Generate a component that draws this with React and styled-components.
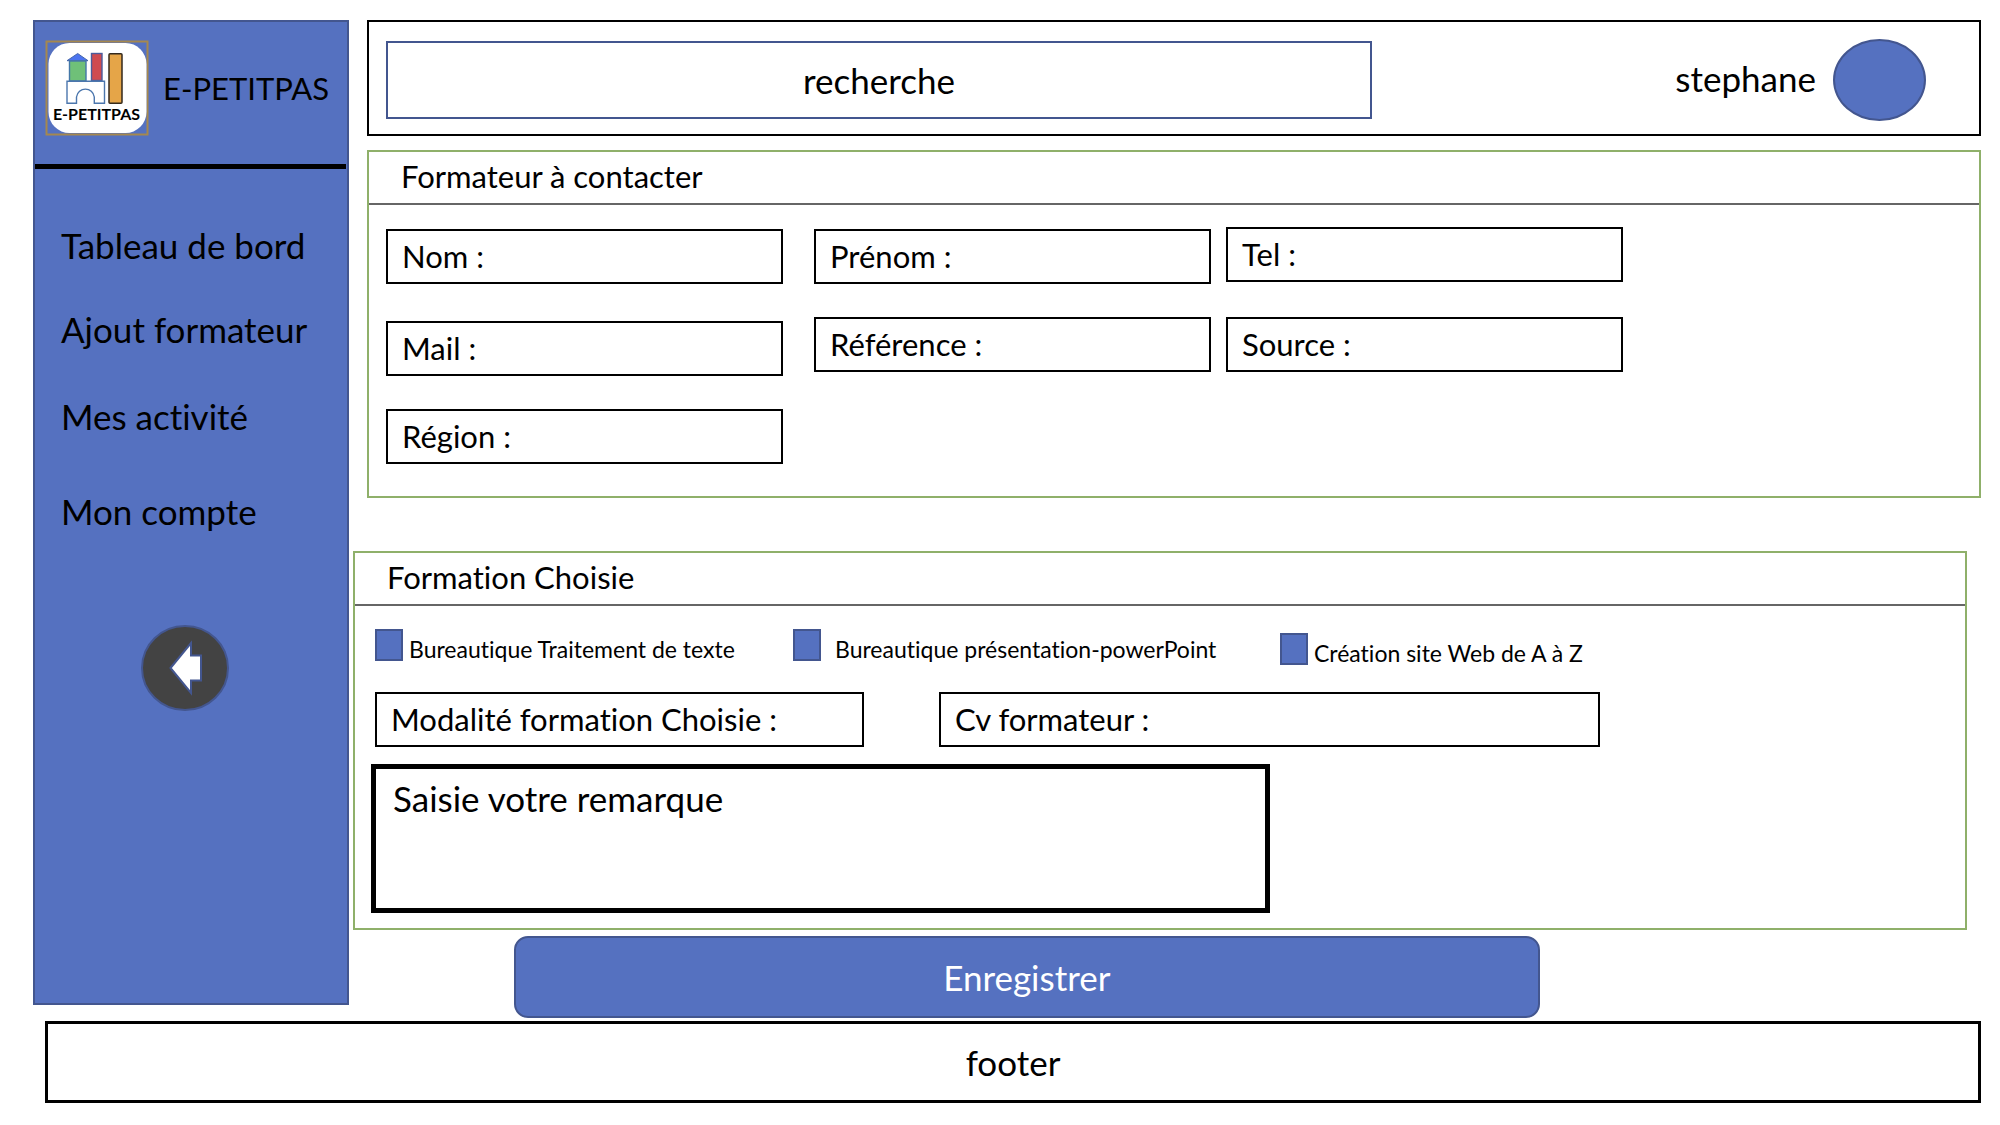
import React from "react";
import styled, { createGlobalStyle } from "styled-components";

const blue = "#5571c0";
const navy = "#43568f";
const green = "#8fb06a";

const GlobalStyle = createGlobalStyle`
  *, *::before, *::after { box-sizing: border-box; }
  body {
    margin: 0;
    background: #fff;
    color: #000;
    font: 35px/40px Lato, sans-serif;
    font-variant-ligatures: none;
  }
  input, textarea, button { font: inherit; font-variant-ligatures: none; color: inherit; }
  input::placeholder, textarea::placeholder { color: #000; opacity: 1; }
`;

const Page = styled.div`
  padding: 20px 19px 21px 33px;
`;

const Shell = styled.div`
  display: flex;
  gap: 4px;
`;

const Sidebar = styled.aside`
  flex: 0 0 316px;
  margin-bottom: 13px;
  border: 2px solid ${navy};
  background: ${blue};
`;

const Brand = styled.div`
  display: flex;
  align-items: center;
  gap: 14px;
  height: 147px;
  margin-right: 1px;
  padding: 0 0 10px 10px;
  border-bottom: 5px solid #000;
`;

const BrandName = styled.span`
  font-size: 31px;
`;

const Logo = styled.svg`
  flex: none;
  width: 104px;
  height: 96px;
`;

const Nav = styled.nav`
  display: grid;
  grid-template-rows: 84px 87px 95px 40px;
  padding: 56px 0 0 26px;
`;

const NavLink = styled.a`
  justify-self: start;
  color: #000;
  text-decoration: none;
`;

const BackButton = styled.button`
  display: block;
  width: 88px;
  height: 86px;
  margin: 94px 0 0 106px;
  padding: 0;
  border: 0;
  background: none;
`;

const Main = styled.main`
  flex: 1;
  min-width: 0;
`;

const TopBar = styled.header`
  display: flex;
  align-items: center;
  height: 116px;
  margin-left: 14px;
  padding: 3px 53px 0 17px;
  border: 2px solid #000;
`;

const Search = styled.input`
  flex: 0 1 986px;
  min-width: 0;
  height: 78px;
  padding: 0;
  border: 2px solid ${navy};
  background: #fff;
  text-align: center;
`;

const User = styled.div`
  display: flex;
  align-items: center;
  gap: 17px;
  margin-left: auto;
`;

const UserName = styled.span`
  padding-bottom: 4px;
`;

const Avatar = styled.span`
  width: 93px;
  height: 82px;
  border: 2px solid ${navy};
  border-radius: 50%;
  background: ${blue};
`;

const Panel = styled.section`
  margin: ${(p) => p.$margin};
  border: 2px solid ${green};
`;

const PanelTitle = styled.h2`
  margin: 0;
  padding: 4px 32px 7px;
  border-bottom: 2px solid #666;
  font-size: 31px;
  font-weight: 400;
`;

const ContactGrid = styled.div`
  display: grid;
  grid-template-columns: minmax(0, 428px) minmax(0, 412px) minmax(0, 397px);
  grid-template-rows: 57px 59px 55px;
  row-gap: 33px;
  padding: 22px 17px 32px;
`;

const Field = styled.label`
  display: flex;
  align-items: center;
  gap: 8px;
  align-self: ${(p) => p.$align || "start"};
  flex: 0 1 ${(p) => p.$width || 397}px;
  width: 100%;
  max-width: ${(p) => p.$width || 397}px;
  height: 55px;
  padding: 0 14px 2px;
  border: 2px solid #000;
  font-size: 31px;
  white-space: nowrap;
`;

const FieldInput = styled.input`
  flex: 1;
  min-width: 0;
  padding: 0;
  border: 0;
  outline: 0;
  background: transparent;
`;

const Options = styled.div`
  display: grid;
  grid-template-columns: minmax(0, 418px) minmax(0, 487px) auto;
  grid-template-rows: 36px;
  justify-content: start;
  padding: 23px 20px 0;
`;

const Option = styled.label`
  display: flex;
  align-items: flex-end;
  align-self: ${(p) => p.$align};
  gap: ${(p) => p.$gap}px;
  height: 32px;
  font-size: 23px;
  line-height: 24px;
  white-space: nowrap;
`;

const Check = styled.input`
  appearance: none;
  flex: none;
  width: 28px;
  height: 32px;
  margin: 0;
  border: 2px solid ${navy};
  background: ${blue};
`;

const Details = styled.div`
  display: flex;
  gap: 75px;
  padding: 27px 20px 17px;
`;

const Remark = styled.textarea`
  display: block;
  width: 899px;
  max-width: calc(100% - 32px);
  height: 149px;
  margin: 0 16px 15px;
  padding: 9px 17px;
  border: 5px solid #000;
  background: #fff;
  resize: none;
`;

const Save = styled.button`
  display: block;
  width: 63%;
  height: 82px;
  margin: 6px 0 0 161px;
  border: 2px solid ${navy};
  border-radius: 14px;
  background: ${blue};
  color: #fff;
`;

const Footer = styled.footer`
  display: flex;
  align-items: center;
  justify-content: center;
  height: 82px;
  margin: 3px 0 0 12px;
  border: 3px solid #000;
`;

const contactFields = [
  ["Nom :", "end"],
  ["Prénom :", "end"],
  ["Tel :", "start"],
  ["Mail :", "end"],
  ["Référence :", "start"],
  ["Source :", "start"],
  ["Région :", "start"],
];

const courses = [
  ["Bureautique Traitement de texte", 6, "start"],
  ["Bureautique présentation-powerPoint", 14, "start"],
  ["Création site Web de A à Z", 6, "end"],
];

const links = ["Tableau de bord", "Ajout formateur", "Mes activité", "Mon compte"];

function BrandLogo() {
  return (
    <Logo viewBox="25 31 104 96" role="img" aria-label="E-PETITPAS">
      <rect x="26.5" y="32.5" width="101" height="93" fill="none" stroke="#a5884e" strokeWidth="2" />
      <rect x="28.5" y="34" width="98" height="90" rx="21" fill="#fff" />
      <path d="M57.7 44.5 68 51.7H47z" fill="#4c74f0" stroke="#4565a8" />
      <rect x="49.5" y="52" width="16.5" height="20" fill="#6fc078" stroke="#4377a8" strokeWidth="1.4" />
      <rect x="71.5" y="44.5" width="10.5" height="27" fill="#cf4b50" stroke="#4b5c9c" strokeWidth="1.4" />
      <rect x="89" y="44.7" width="13" height="49.6" rx="1" fill="#e5a548" stroke="#33291c" strokeWidth="1.5" />
      <path d="M47 72.3H84.5V94.3H74.3V88A9 9.3 0 0 0 56.5 88V94.3H47z" fill="#fff" stroke="#4b76ad" strokeWidth="1.4" />
      <text x="76.5" y="111" textAnchor="middle" fontFamily="Lato, sans-serif" fontWeight="700" fontSize="16">
        E-PETITPAS
      </text>
    </Logo>
  );
}

export default function App() {
  return (
    <>
      <GlobalStyle />
      <Page>
        <Shell>
          <Sidebar>
            <Brand>
              <BrandLogo />
              <BrandName>E-PETITPAS</BrandName>
            </Brand>
            <Nav>
              {links.map((l) => (
                <NavLink href="#" key={l}>{l}</NavLink>
              ))}
            </Nav>
            <BackButton type="button" aria-label="Retour">
              <svg width="88" height="86" viewBox="0 0 88 86">
                <ellipse cx="44" cy="43" rx="43" ry="42" fill="#434343" stroke={navy} strokeWidth="2" />
                <path d="M29.5 43 50 18V30.500H60V55.500H50V68z" fill="#fff" stroke={navy} strokeWidth="2" />
              </svg>
            </BackButton>
          </Sidebar>
          <Main>
            <TopBar>
              <Search type="text" placeholder="recherche" aria-label="recherche" />
              <User>
                <UserName>stephane</UserName>
                <Avatar />
              </User>
            </TopBar>
            <Panel $margin="14px 0 53px 14px">
              <PanelTitle>Formateur à contacter</PanelTitle>
              <ContactGrid>
                {contactFields.map(([label, align]) => (
                  <Field key={label} $align={align}>
                    {label}
                    <FieldInput type="text" />
                  </Field>
                ))}
              </ContactGrid>
            </Panel>
            <Panel $margin="0 14px 0 0">
              <PanelTitle>Formation Choisie</PanelTitle>
              <Options>
                {courses.map(([label, gap, align]) => (
                  <Option key={label} $gap={gap} $align={align}>
                    <Check type="checkbox" />
                    {label}
                  </Option>
                ))}
              </Options>
              <Details>
                <Field $width={489}>
                  Modalité formation Choisie :
                  <FieldInput type="text" />
                </Field>
                <Field $width={661}>
                  Cv formateur :
                  <FieldInput type="text" />
                </Field>
              </Details>
              <Remark placeholder="Saisie votre remarque" aria-label="Saisie votre remarque" />
            </Panel>
            <Save type="submit">Enregistrer</Save>
          </Main>
        </Shell>
        <Footer>footer</Footer>
      </Page>
    </>
  );
}
